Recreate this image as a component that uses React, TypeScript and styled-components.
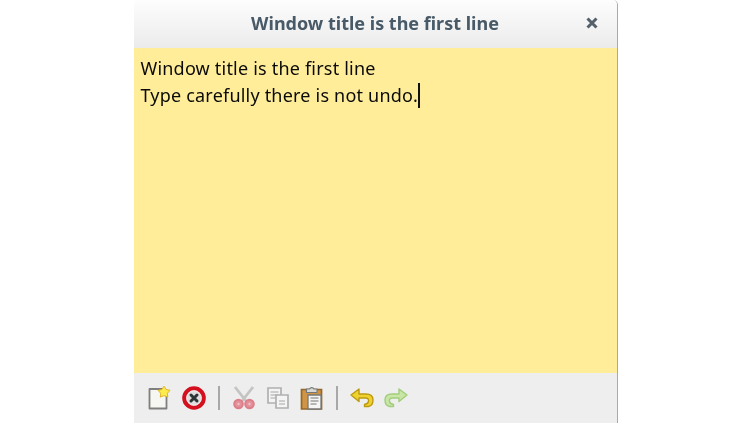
import React from "react";
import styled, { createGlobalStyle } from "styled-components";

const Global = createGlobalStyle`
  html, body { margin: 0; padding: 0; background: #fff; overflow: hidden; }
  #root { width: 752px; height: 423px; }
`;
const Page = styled.div`
  width: 752px; height: 423px; display: flex; justify-content: center; margin-left: -0.5px; background: #fff;
`;
const Win = styled.div`
  width: 484px; height: 423px; display: flex; flex-direction: column; border-right: 1px solid #a9a9a9; box-sizing: border-box; border-radius: 5px 5px 0 0; overflow: hidden;
`;
const Header = styled.header`
  height: 48px; flex: none; display: flex; align-items: center; justify-content: center; position: relative; box-sizing: border-box;
  background: linear-gradient(#fdfdfd, #ebebeb); padding-bottom: 2px;
  color: #485a68; font: 700 18px "Noto Sans", sans-serif; filter: blur(0.3px);
`;
const Close = styled.svg`
  position: absolute; right: 18px; top: 16px; width: 14px; height: 14px;
`;
const Editor = styled.main`
  flex: 1; background: #ffed99; padding: 7px 7px; color: #0a0a0a; font: 400 18px/27px "Noto Sans", sans-serif; letter-spacing: 0.2px; filter: blur(0.3px);
`;
const Line = styled.div` white-space: nowrap; display: flex; align-items: center; `;
const Caret = styled.span` display: inline-block; width: 1.5px; height: 25px; background: #111; `;
const Toolbar = styled.footer`
  height: 50px; flex: none; display: flex; align-items: center; background: #eeeeee; padding-left: 13px; box-sizing: border-box; filter: blur(0.5px);
`;
const Tool = styled.svg<{ $gap?: number }>`
  width: 24px; height: 24px; flex: none; margin-right: ${p => p.$gap ?? 0}px;
`;
const Sep = styled.div`
  width: 1.5px; height: 24px; background: #a8a8a8; flex: none; margin: 0 12px 0 12.5px;
`;

const NewIcon = () => (
  <Tool viewBox="0 0 24 24" $gap={11}>
    <path d="M2.500 3h14l3 2v17.500h-17z" fill="#f6f6f2" stroke="#7f7f7d" strokeWidth="1.800" strokeLinejoin="round" />
    <path d="M17 .2l2.200 3.300 3.800.8-2.600 3 .4 3.800-3.800-1.500-3.700 1.500.4-3.800-2.600-3 3.800-.8z" fill="#fdec50" stroke="#e2b41e" strokeWidth="1" />
  </Tool>
);
const StopIcon = () => (
  <Tool viewBox="0 0 24 24">
    <circle cx="12" cy="12" r="9.800" fill="#dedede" stroke="#d4101e" strokeWidth="4" />
    <circle cx="12" cy="12" r="7.200" fill="none" stroke="#f6e6e6" strokeWidth="1" />
    <path d="M9 9l6 6M15 9l-6 6" stroke="#2e3436" strokeWidth="3" strokeLinecap="round" />
  </Tool>
);
const CutIcon = () => (
  <Tool viewBox="0 0 24 24" $gap={10}>
    <path d="M3 1l11 14M21 1L10 15" stroke="#c4c4c2" strokeWidth="2.800" />
    <circle cx="6.500" cy="18" r="4.300" fill="#e58f9a" stroke="#dc7f8a" strokeWidth="2" />
    <circle cx="17.500" cy="18" r="4.300" fill="#e58f9a" stroke="#dc7f8a" strokeWidth="2" />
    <circle cx="6.500" cy="18" r="1.200" fill="#f0c0c5" />
    <circle cx="17.500" cy="18" r="1.200" fill="#f0c0c5" />
  </Tool>
);
const CopyIcon = () => (
  <Tool viewBox="0 0 24 24" $gap={10}>
    <path d="M2 2h13v15H2z" fill="#f4f4f4" stroke="#b0b0b0" strokeWidth="1.700" />
    <path d="M4.500 6h8M4.500 9h8M4.500 12h5" stroke="#c0c0c0" strokeWidth="1.300" />
    <path d="M10 9h12v13H10z" fill="#f4f4f4" stroke="#b0b0b0" strokeWidth="1.700" />
    <path d="M13 15h6M13 18h6" stroke="#c0c0c0" strokeWidth="1.300" />
  </Tool>
);
const PasteIcon = () => (
  <Tool viewBox="0 0 24 24">
    <path d="M1.500 3.500h20v19.500h-20z" fill="#cf9445" stroke="#94672a" strokeWidth="1.700" />
    <path d="M8 23V9h13v14z" fill="#f5f5f3" stroke="#777" strokeWidth="1.300" />
    <path d="M10.500 12h8M10.500 15h8M10.500 18h6" stroke="#777" strokeWidth="1.200" />
    <path d="M6.500 6.500V3h3a2.500 2.500 0 0 1 4.500 0H17v3.500z" fill="#d8d8d6" stroke="#777" strokeWidth="1.100" />
  </Tool>
);
const UndoIcon = () => (
  <Tool viewBox="0 0 24 24" $gap={10}>
    <path d="M9 3L1 9l8 6.500V12h6.500c2.500 0 3.500 1.500 3 3.500-.3 1.500-1.500 2.500-4 3v2h4c2.500-.5 4.500-3 4.500-6.500 0-3.500-2-6-7-6H9z" fill="#eed330" stroke="#bd9a10" strokeWidth="1.400" strokeLinejoin="round" />
  </Tool>
);
const RedoIcon = () => (
  <Tool viewBox="0 0 24 24">
    <path d="M15 3l8 6-8 6.500V12H8.500c-2.500 0-3.500 1.500-3 3.500.3 1.500 1.500 2.500 4 3v2h-4c-2.500-.5-4.500-3-4.500-6.500 0-3.500 2-6 7-6H15z" fill="#c8e6a5" stroke="#a2cd7c" strokeWidth="1.400" strokeLinejoin="round" />
  </Tool>
);

export default function App() {
  return (
    <Page>
      <Global />
      <Win>
        <Header>
          Window title is the first line
          <Close viewBox="0 0 14 14">
            <path d="M2.500 2.500l9 9M11.500 2.500l-9 9" stroke="#55616a" strokeWidth="3" />
          </Close>
        </Header>
        <Editor>
          <Line>Window title is the first line</Line>
          <Line>Type carefully there is not undo.<Caret /></Line>
        </Editor>
        <Toolbar>
          <NewIcon />
          <StopIcon />
          <Sep />
          <CutIcon />
          <CopyIcon />
          <PasteIcon />
          <Sep />
          <UndoIcon />
          <RedoIcon />
        </Toolbar>
      </Win>
    </Page>
  );
}
